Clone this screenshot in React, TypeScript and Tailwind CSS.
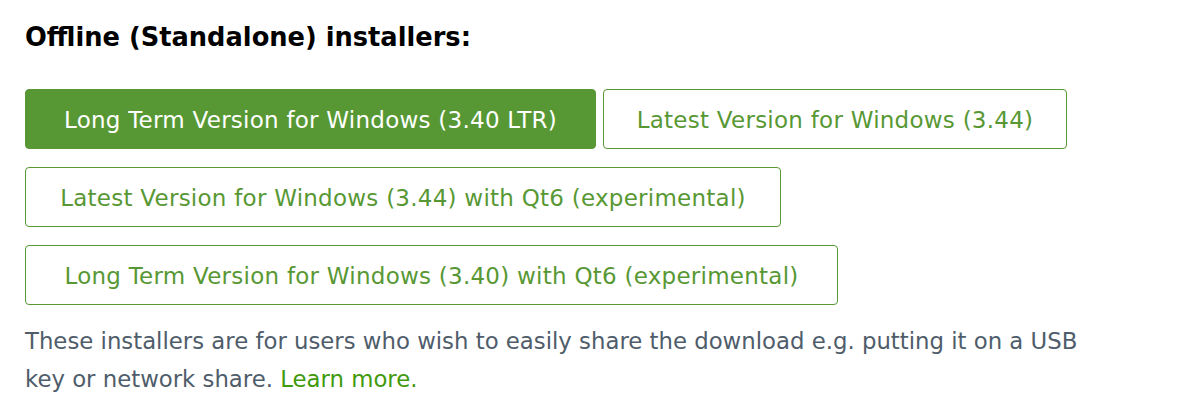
const installers = [
  { label: "Long Term Version for Windows (3.40 LTR)", primary: true, width: "w-[571px]" },
  { label: "Latest Version for Windows (3.44)", primary: false, width: "w-[464px]" },
  { label: "Latest Version for Windows (3.44) with Qt6 (experimental)", primary: false, width: "w-[756px]" },
  { label: "Long Term Version for Windows (3.40) with Qt6 (experimental)", primary: false, width: "w-[813px]" },
];

export default function App() {
  return (
    <div className="bg-white w-[1190px] h-[413px] pl-[25px] pt-[19px] font-['DejaVu_Sans',sans-serif]">
      <h2 className="text-[25.7px] leading-[36px] font-bold text-black">Offline (Standalone) installers:</h2>

      {/* Buttons */}
      <div className="flex flex-wrap gap-x-[7px] gap-y-[18px] mt-[34px] max-w-[1100px]">
        {installers.map((item) => (
          <a
            key={item.label}
            href="#"
            className={`${item.width} h-[60px] pt-[3px] flex items-center justify-center rounded-[4px] border text-[23px] tracking-[0.25px] ${
              item.primary
                ? "bg-[#589834] border-[#589834] text-white"
                : "bg-white border-[#589834] text-[#589834]"
            }`}
          >
            {item.label}
          </a>
        ))}
      </div>

      <p className="mt-[17px] max-w-[1090px] text-[22.8px] leading-[38px] text-[#4f5d6b]">
        These installers are for users who wish to easily share the download e.g. putting it on a USB key or network
        share. <a href="#" className="text-[#3f9a0c]">Learn more.</a>
      </p>
    </div>
  );
}
